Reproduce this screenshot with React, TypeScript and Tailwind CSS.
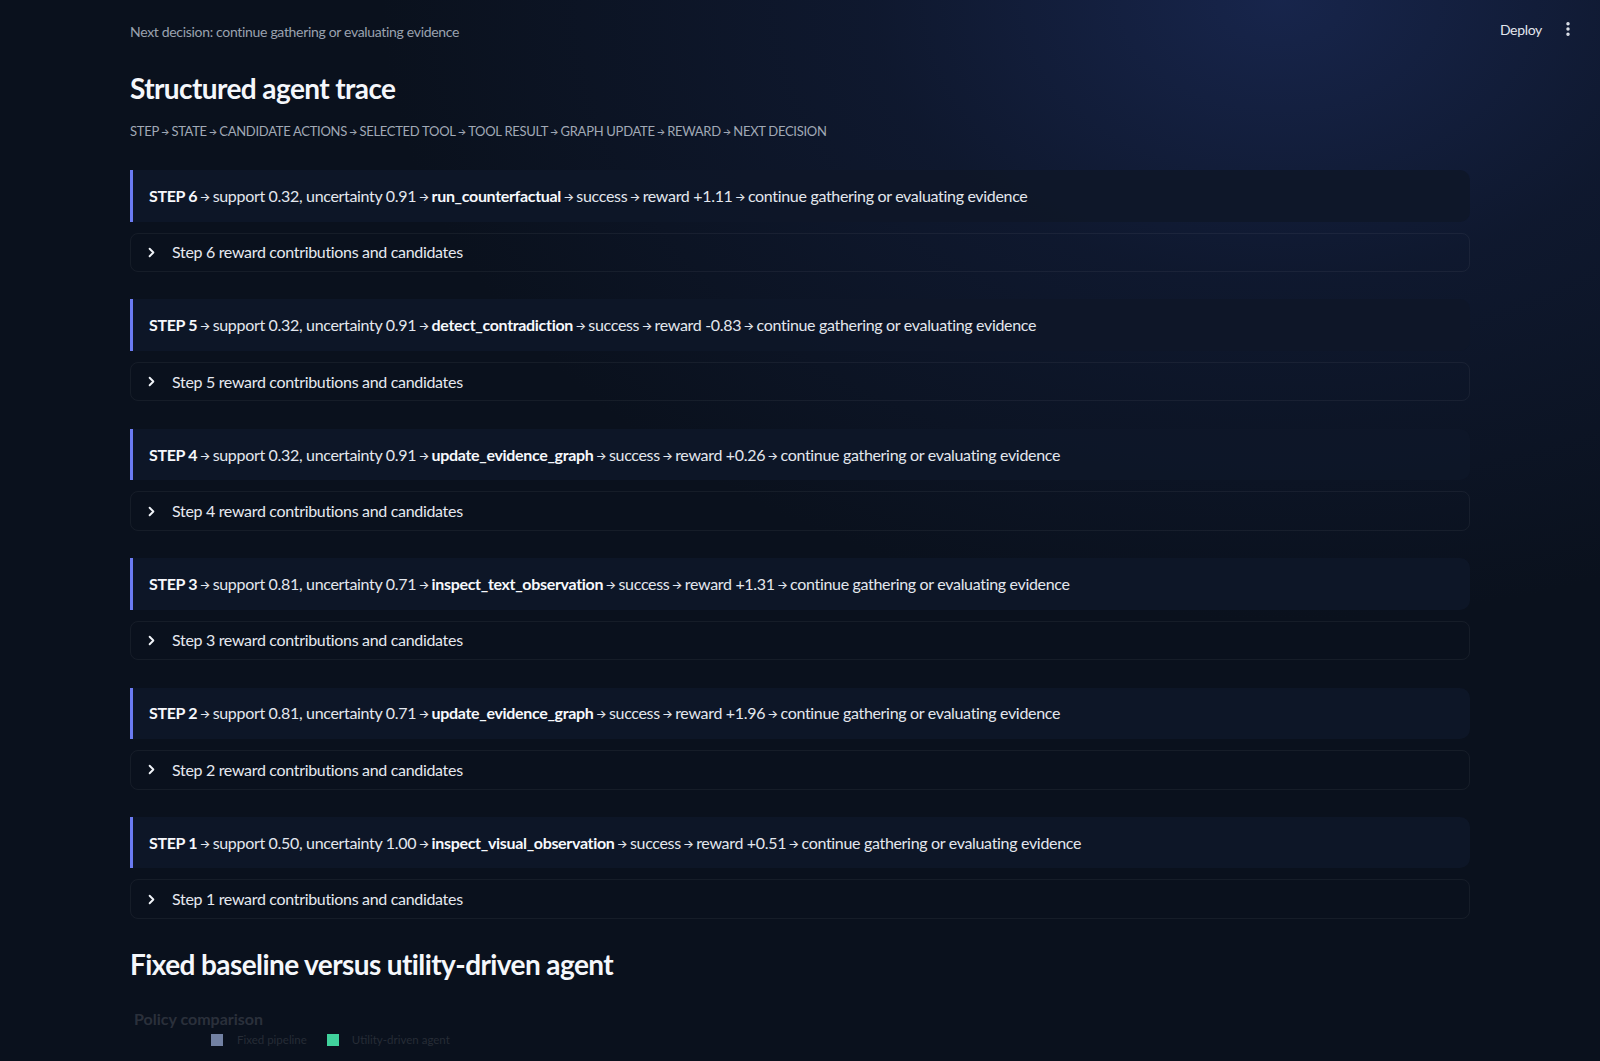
import React from 'react';
import { ChevronRight, EllipsisVertical } from 'lucide-react';

type Step = {
  n: number;
  support: string;
  uncertainty: string;
  tool: string;
  reward: string;
};

const steps: Step[] = [
  { n: 6, support: '0.32', uncertainty: '0.91', tool: 'run_counterfactual', reward: '+1.11' },
  { n: 5, support: '0.32', uncertainty: '0.91', tool: 'detect_contradiction', reward: '-0.83' },
  { n: 4, support: '0.32', uncertainty: '0.91', tool: 'update_evidence_graph', reward: '+0.26' },
  { n: 3, support: '0.81', uncertainty: '0.71', tool: 'inspect_text_observation', reward: '+1.31' },
  { n: 2, support: '0.81', uncertainty: '0.71', tool: 'update_evidence_graph', reward: '+1.96' },
  { n: 1, support: '0.50', uncertainty: '1.00', tool: 'inspect_visual_observation', reward: '+0.51' },
];

const pipeline = [
  'STEP',
  'STATE',
  'CANDIDATE ACTIONS',
  'SELECTED TOOL',
  'TOOL RESULT',
  'GRAPH UPDATE',
  'REWARD',
  'NEXT DECISION',
];

// narrow arrow separator, sized relative to the surrounding text
const Arrow = () => (
  <span className="inline-block w-[0.96em] text-center tracking-normal">
    <span
      className="relative top-[-0.08em] text-[0.72em] font-medium"
      style={{ fontFamily: 'Inter, "DejaVu Sans", sans-serif' }}
    >
      →
    </span>
  </span>
);

function StepCard({ step }: { step: Step }) {
  return (
    <div className="flex flex-col">
      {/* one-line summary of the step */}
      <div className="h-[51.5px] flex items-center pl-[16px] border-l-[3px] border-[#6b7bf2] rounded-r-[10px] bg-[rgba(14,23,40,0.92)] text-[16px] text-[#e3e7ee]">
        <span className="font-bold text-[#f6f8fc]">STEP {step.n}</span>
        <Arrow />
        <span>
          support {step.support}, uncertainty {step.uncertainty}
        </span>
        <Arrow />
        <span className="font-bold text-[#f6f8fc]">{step.tool}</span>
        <Arrow />
        <span>success</span>
        <Arrow />
        <span>reward {step.reward}</span>
        <Arrow />
        <span>continue gathering or evaluating evidence</span>
      </div>

      {/* collapsed expander */}
      <div className="mt-[11px] h-[39.5px] flex items-center gap-[13px] pl-[13px] rounded-[8px] border border-[rgba(255,255,255,0.05)] text-[16px] text-[#e6e9f0]">
        <ChevronRight size={15} strokeWidth={3} className="text-[#f1f4f9]" />
        <span>Step {step.n} reward contributions and candidates</span>
      </div>
    </div>
  );
}

export default function App() {
  return (
    <div
      className="relative min-h-screen w-full overflow-hidden bg-[#0a111d] bg-[radial-gradient(ellipse_900px_620px_at_80%_0%,rgba(24,38,78,0.95)_0%,rgba(18,29,58,0.6)_45%,rgba(10,17,29,0)_100%)] text-[#e5e7eb] tracking-[-0.02em]"
      style={{ fontFamily: 'Lato, "Noto Sans", sans-serif' }}
    >
      {/* top toolbar */}
      <div className="absolute top-0 right-0 h-[58px] flex items-center gap-[17px] pr-[23px]">
        <span className="text-[14px] text-[#e2e6ee]">Deploy</span>
        <EllipsisVertical size={18} strokeWidth={2.6} className="text-[#e2e6ee]" />
      </div>

      <main className="mx-auto w-[1340px] pt-[22px] pb-[10px]">
        <p className="text-[14px] leading-[20px] text-[#9aa2af]">
          Next decision: continue gathering or evaluating evidence
        </p>

        <h3 className="mt-[29px] text-[28px] leading-[34px] font-bold text-[#f5f7fb] tracking-[-0.021em]">
          Structured agent trace
        </h3>

        <p className="mt-[16px] text-[13px] leading-[20px] text-[#a1a9b6] tracking-[-0.022em]">
          {pipeline.map((p, i) => (
            <React.Fragment key={p}>
              {i > 0 && <Arrow />}
              {p}
            </React.Fragment>
          ))}
        </p>

        <div className="mt-[27px] flex flex-col gap-[27.4px]">
          {steps.map((s) => (
            <StepCard key={s.n} step={s} />
          ))}
        </div>

        <h3 className="mt-[28.5px] text-[28px] leading-[34px] font-bold text-[#f5f7fb] tracking-[-0.021em]">
          Fixed baseline versus utility-driven agent
        </h3>

        <div className="mt-[29px] pl-[4px] tracking-normal">
          <div className="text-[16px] leading-[18px] font-bold text-[#2a303b]">Policy comparison</div>
          <div className="mt-[3px] ml-[77px] flex items-center text-[11.5px] text-[#262c36]">
            <span className="w-[12px] h-[12px] bg-[#7281a3]" />
            <span className="ml-[14px]">Fixed pipeline</span>
            <span className="ml-[20px] w-[12px] h-[12px] bg-[#40d29c]" />
            <span className="ml-[13px]">Utility-driven agent</span>
          </div>
        </div>
      </main>
    </div>
  );
}
